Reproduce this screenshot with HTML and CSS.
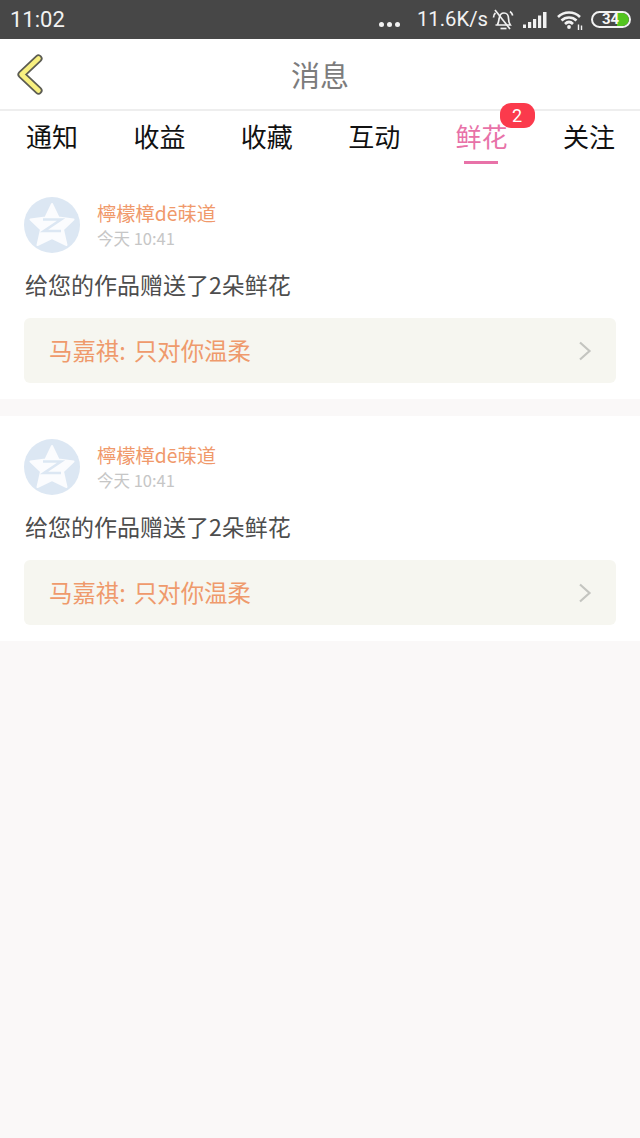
FILE: index.html
```html
<!DOCTYPE html>
<html lang="zh">
<head>
<meta charset="utf-8">
<title>消息</title>
<link rel="stylesheet" href="styles.css">
</head>
<body>
<div class="status">
  <span class="clock">11:02</span>
  <div class="status-right">
    <span class="dots"><i></i><i></i><i></i></span>
    <span class="speed">11.6K/s</span>
    <svg class="ic-bell" width="22" height="22" viewBox="0 0 22 22" fill="none" stroke="#f2f2f2" stroke-width="1.700"><path d="M5.500 15.500c1.200-2 1.200-4 1.700-6.500C7.700 6 9.700 4 12 4c2.800 0 4.500 2.300 4.500 5.200 0 2.800.6 5 1.800 6.800H3.500"/><path d="M8.500 19.500h6"/><path d="M3 1l15 19"/><path d="M18 2.500c1.500 1 2.300 2.300 2.700 4M1.500 8.500c0-2 .7-3.500 2-4.500"/></svg>
    <svg class="ic-signal" width="24" height="16" viewBox="0 0 24 16" fill="#f2f2f2"><rect x="0" y="12.500" width="3" height="3.500"/><rect x="5" y="10" width="3.200" height="6"/><rect x="10" y="7" width="3.200" height="9"/><rect x="15" y="3.500" width="3.200" height="12.500"/><rect x="20" y="0" width="3.500" height="16"/></svg>
    <svg class="ic-wifi" width="26" height="20" viewBox="0 0 26 20" fill="none" stroke="#f2f2f2" stroke-width="2.600"><path d="M1 7c6-6 16-6 22 0"/><path d="M4.500 10.500c4-4 11-4 15 0"/><path d="M8 14c2.500-2.500 5.500-2.500 8 0"/><circle cx="12" cy="17" r="1.900" fill="#f2f2f2" stroke="none"/><path d="M21.500 14.500v5.500M24.500 15.500v4.500" stroke-width="1.400"/></svg>
    <div class="battery"><div class="battery-fill"></div><span class="battery-num">34</span></div>
  </div>
</div>

<header class="nav">
  <svg class="back" width="32" height="44" viewBox="0 0 32 44"><path d="M24.500 5.500 7.500 21.500l17 16" fill="none" stroke="#5c5c52" stroke-width="8" stroke-linecap="round" stroke-linejoin="round"/><path d="M24.500 5.500 7.500 21.500l17 16" fill="none" stroke="#f8f080" stroke-width="4.500" stroke-linecap="round" stroke-linejoin="round"/></svg>
  <h1 class="title">消息</h1>
</header>

<nav class="tabs">
  <a class="tab">通知</a>
  <a class="tab">收益</a>
  <a class="tab">收藏</a>
  <a class="tab">互动</a>
  <a class="tab active">鲜花<span class="badge">2</span></a>
  <a class="tab">关注</a>
</nav>

<section class="card">
  <div class="user">
    <svg class="avatar" width="56" height="56" viewBox="0 0 56 56"><circle cx="28" cy="28" r="28" fill="#dce7f3"/><path d="M28 7l6.500 13.500 15 2-10.500 10 3.500 15.500-14.500-7-14.500 7 3.500-15.500-10.500-10 15-2z" fill="#fbfcfe" stroke="#fbfcfe" stroke-width="2" stroke-linejoin="round"/><path d="M19 22.500h18L20 34h17" fill="none" stroke="#dce7f3" stroke-width="2.600"/></svg>
    <div class="meta">
      <div class="name">檸檬樟dē菋道</div>
      <div class="time">今天 10:41</div>
    </div>
  </div>
  <p class="msg">给您的作品赠送了2朵鲜花</p>
  <div class="work">
    <span class="work-title">马嘉祺: 只对你温柔</span>
    <svg class="chev" width="14" height="20" viewBox="0 0 14 20" fill="none" stroke="#c4c5c0" stroke-width="2.200"><path d="M2 1.500 11.500 10 2 18.500"/></svg>
  </div>
</section>

<section class="card">
  <div class="user">
    <svg class="avatar" width="56" height="56" viewBox="0 0 56 56"><circle cx="28" cy="28" r="28" fill="#dce7f3"/><path d="M28 7l6.500 13.500 15 2-10.500 10 3.500 15.500-14.500-7-14.500 7 3.500-15.500-10.500-10 15-2z" fill="#fbfcfe" stroke="#fbfcfe" stroke-width="2" stroke-linejoin="round"/><path d="M19 22.500h18L20 34h17" fill="none" stroke="#dce7f3" stroke-width="2.600"/></svg>
    <div class="meta">
      <div class="name">檸檬樟dē菋道</div>
      <div class="time">今天 10:41</div>
    </div>
  </div>
  <p class="msg">给您的作品赠送了2朵鲜花</p>
  <div class="work">
    <span class="work-title">马嘉祺: 只对你温柔</span>
    <svg class="chev" width="14" height="20" viewBox="0 0 14 20" fill="none" stroke="#c4c5c0" stroke-width="2.200"><path d="M2 1.500 11.500 10 2 18.500"/></svg>
  </div>
</section>
</body>
</html>
```
FILE: styles.css
```css
* { box-sizing: border-box; }
html, body { margin: 0; padding: 0; }
body {
  width: 640px;
  height: 1138px;
  overflow: hidden;
  background: #faf8f8;
  font-family: "Noto Sans CJK SC", "Noto Sans", sans-serif;
}
.status {
  height: 39px;
  background: #474747;
  color: #f2f2f2;
  display: flex;
  align-items: center;
  justify-content: space-between;
  padding: 0 9px 0 10px;
}
.clock { font: 22px/39px Roboto, sans-serif; }
.status-right { display: flex; align-items: center; }
.dots { display: flex; gap: 3px; margin-right: 17px; margin-top: 9px; }
.dots i { width: 5px; height: 5px; border-radius: 50%; background: #f2f2f2; display: block; }
.speed { font: 20.300px/39px Roboto, sans-serif; margin-right: 4px; }
.ic-bell { margin-right: 9px; }
.ic-signal { margin-right: 10px; }
.ic-wifi { margin-right: 8px; }
.battery {
  position: relative;
  width: 40px;
  height: 17px;
  border: 2px solid #f2f2f2;
  border-radius: 9px;
  overflow: hidden;
}
.battery-fill {
  width: 27px;
  height: 100%;
  background: linear-gradient(90deg, #474747 0 15px, #53c41f 15px);
  border-radius: 0 7px 7px 0;
  margin-left: 9px;
}
.battery-num {
  position: absolute;
  left: 9px;
  top: -2px;
  font: bold 15px/17px Roboto, sans-serif;
  color: #f6f6f6;
}
.nav {
  height: 72px;
  background: #fff;
  border-bottom: 2px solid #eeeeee;
  position: relative;
  display: flex;
  align-items: center;
  justify-content: center;
}
.back { position: absolute; left: 14px; top: 14px; }
.title {
  margin: 0;
  font-size: 29px;
  font-weight: 400;
  color: #7c7c7c;
  line-height: 72px;
}
.tabs {
  height: 63px;
  background: #fff;
  display: flex;
  justify-content: space-between;
  padding: 0 25px 0 26px;
}
.tab {
  position: relative;
  font-size: 26px;
  line-height: 49px;
  color: #111;
  height: 55px;
}
.tab.active { color: #e872a8; }
.tab.active::after {
  content: "";
  position: absolute;
  left: 8px;
  right: 10px;
  top: 50px;
  height: 3px;
  background: #e872a8;
}
.badge {
  position: absolute;
  left: 44px;
  top: -8px;
  width: 35px;
  height: 25px;
  border-radius: 11px;
  background: #fb3a4c;
  color: #fff;
  font: 18px/25px Roboto, sans-serif;
  text-align: center;
}
.card {
  height: 225px;
  background: #fff;
  padding: 23px 24px 0;
  margin-bottom: 17px;
}
.user { display: flex; }
.meta { margin-left: 17px; padding-top: 2px; }
.name { font-size: 19.300px; line-height: 28px; color: #f0996b; }
.time { font-size: 16.500px; line-height: 22px; color: #c6c6c6; font-family: "Noto Sans CJK SC", Roboto, sans-serif; }
.msg {
  margin: 14px 0 0 1px;
  font-size: 23px;
  line-height: 34px;
  color: #4d4d4d;
}
.work {
  margin-top: 17px;
  height: 65px;
  background: #f6f6f0;
  border-radius: 6px;
  display: flex;
  align-items: center;
  justify-content: space-between;
  padding: 0 24px 0 25px;
}
.work-title { font-size: 23.400px; word-spacing: 3px; color: #ef9a6c; line-height: 65px; }
```
